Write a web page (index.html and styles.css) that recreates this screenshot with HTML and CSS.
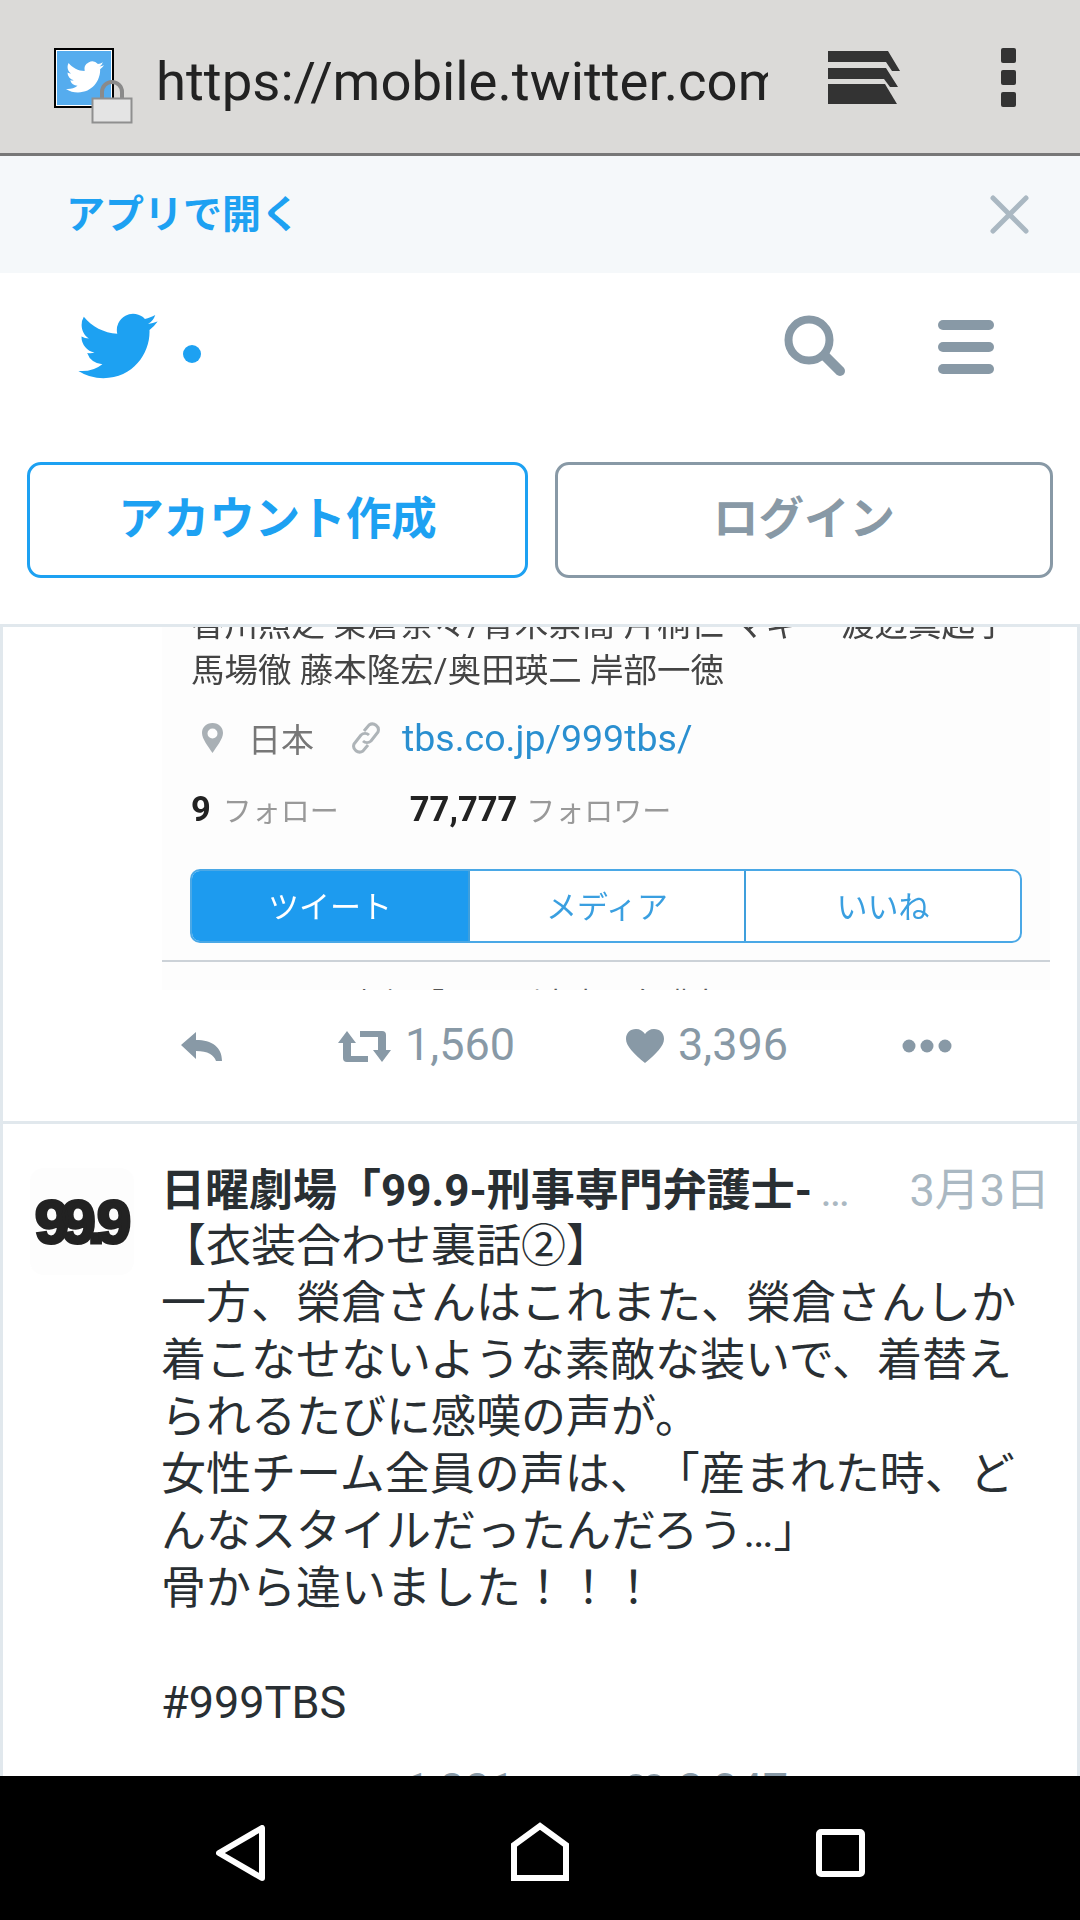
FILE: index.html
```html
<!DOCTYPE html>
<html lang="ja">
<head>
  <meta charset="UTF-8">
  <meta name="viewport" content="width=device-width, initial-scale=1.0">
  <title>Twitter</title>
  <link rel="stylesheet" href="styles.css">
</head>
<body>
  <div class="phone">
    <!-- browser chrome -->
    <div class="browser-bar">
      <div class="favicon">
        <svg class="favicon-bird" viewBox="0 0 24 24"><path fill="#fff" d="M23.953 4.57a10 10 0 01-2.825.775 4.958 4.958 0 002.163-2.723c-.951.555-2.005.959-3.127 1.184a4.92 4.92 0 00-8.384 4.482C7.69 8.095 4.067 6.13 1.64 3.162a4.822 4.822 0 00-.666 2.475c0 1.71.87 3.213 2.188 4.096a4.904 4.904 0 01-2.228-.616v.06a4.923 4.923 0 003.946 4.827 4.996 4.996 0 01-2.212.085 4.936 4.936 0 004.604 3.417 9.867 9.867 0 01-6.102 2.105c-.39 0-.779-.023-1.17-.067a13.995 13.995 0 007.557 2.209c9.053 0 13.998-7.496 13.998-13.985 0-.21 0-.42-.015-.63A9.935 9.935 0 0024 4.59z"/></svg>
        <svg class="lock" viewBox="0 0 42 44">
          <path d="M11 20V12a10 10 0 0120 0v8" fill="none" stroke="#8a8a8a" stroke-width="4"/>
          <rect x="1.5" y="18.5" width="39" height="24" fill="#e4e4e4" stroke="#8f8f8f" stroke-width="2"/>
        </svg>
      </div>
      <div class="url">https://mobile.twitter.com/999tbs</div>
      <svg class="tabs-icon" viewBox="0 0 72 53">
        <path fill="#333" d="M0 0H60L72 20H64L58 11H0Z"/>
        <path fill="#333" d="M0 17H58L70 36H62L56 28H0Z"/>
        <path fill="#333" d="M0 33H57L69 53H0Z"/>
      </svg>
      <div class="menu-dots"><span></span><span></span><span></span></div>
    </div>

    <div class="app-banner">
      <span class="app-banner-text">アプリで開く</span>
      <svg class="close-icon" viewBox="0 0 39 39"><path d="M3 3L36 36M36 3L3 36" stroke="#aab8c2" stroke-width="5" stroke-linecap="round"/></svg>
    </div>

    <header class="site-header">
      <div class="site-top">
        <svg class="logo" viewBox="0 0 24 20"><path fill="#1da1f2" d="M23.953 2.57a10 10 0 01-2.825.775 4.958 4.958 0 002.163-2.723c-.951.555-2.005.959-3.127 1.184a4.92 4.92 0 00-8.384 4.482C7.69 6.095 4.067 4.13 1.64 1.162a4.822 4.822 0 00-.666 2.475c0 1.71.87 3.213 2.188 4.096a4.904 4.904 0 01-2.228-.616v.06a4.923 4.923 0 003.946 4.827 4.996 4.996 0 01-2.212.085 4.936 4.936 0 004.604 3.417 9.867 9.867 0 01-6.102 2.105c-.39 0-.779-.023-1.17-.067a13.995 13.995 0 007.557 2.209c9.053 0 13.998-7.496 13.998-13.985 0-.21 0-.42-.015-.63A9.935 9.935 0 0024 2.59z"/></svg>
        <span class="logo-dot"></span>
        <svg class="search-icon" viewBox="0 0 62 62">
          <circle cx="25" cy="25" r="20.500" fill="none" stroke="#8899a6" stroke-width="8"/>
          <path d="M41 41L56 56" stroke="#8899a6" stroke-width="10" stroke-linecap="round"/>
        </svg>
        <div class="burger"><span></span><span></span><span></span></div>
      </div>
      <div class="site-buttons">
        <a class="btn btn-signup">アカウント作成</a>
        <a class="btn btn-login">ログイン</a>
      </div>
    </header>

    <main class="timeline">
      <article class="tweet">
        <!-- screenshot attached to the tweet, cut off at top and bottom -->
        <div class="shot">
          <div class="shot-body">
            <p class="shot-bio">香川照之 榮倉奈々/青木崇高 片桐仁 マギー 渡辺真起子<br>馬場徹 藤本隆宏/奥田瑛二 岸部一徳</p>
            <div class="shot-meta">
              <svg class="pin-icon" viewBox="0 0 23 30"><path fill-rule="evenodd" fill="#a9b0b5" d="M11.5 0C5 0 1 4.500 1 10c0 6 6 13 10.500 20C16 23 22 16 22 10 22 4.500 18 0 11.500 0zm0 5.500a5 5 0 110 10 5 5 0 010-10z"/></svg>
              <span class="shot-place">日本</span>
              <svg class="link-icon" viewBox="0 0 30 32"><path d="M13 9l5-6a6 6 0 019 7l-7 9a6 6 0 01-8 0M17 23l-5 6a6 6 0 01-9-7l7-9a6 6 0 018 0" fill="none" stroke="#aeb4b8" stroke-width="3"/></svg>
              <span class="shot-link">tbs.co.jp/999tbs/</span>
            </div>
            <div class="shot-stats">
              <b>9</b><span class="shot-label">フォロー</span>
              <b class="shot-followers">77,777</b><span class="shot-label shot-label-tight">フォロワー</span>
            </div>
            <div class="shot-tabs">
              <div class="shot-tab shot-tab-active">ツイート</div>
              <div class="shot-tab">メディア</div>
              <div class="shot-tab">いいね</div>
            </div>
          </div>
          <div class="shot-rule"></div>
          <div class="shot-next">
            <span>日曜劇場「99.9-刑事専門弁護士を語る</span>
          </div>
        </div>
        <div class="actions">
          <svg class="icon-reply" viewBox="0 0 41 29"><path fill="#8899a6" d="M0 13L15 0V8C31 8 41 15 41 29H35C33 23 27 19 15 19V27Z"/></svg>
          <div class="action">
            <svg class="icon-retweet" viewBox="0 0 53 31"><path fill="#8899a6" d="M9 0L18 12H13V25H30V31H9Q5 31 5 27V12H0ZM22 0H44Q48 0 48 4V19H53L44 31 35 19H40V6H22Z"/></svg>
            <span class="count">1,560</span>
          </div>
          <div class="action">
            <svg class="icon-heart" viewBox="0 0 38 34"><path fill="#8899a6" d="M19 34C8 25 0 17 0 10 0 4 4 0 10 0 14 0 17 2 19 5 21 2 24 0 28 0 34 0 38 4 38 10 38 17 30 25 19 34Z"/></svg>
            <span class="count">3,396</span>
          </div>
          <svg class="icon-more" viewBox="0 0 50 14"><circle cx="7" cy="7" r="6.500" fill="#8899a6"/><circle cx="25" cy="7" r="6.500" fill="#8899a6"/><circle cx="43" cy="7" r="6.500" fill="#8899a6"/></svg>
        </div>
      </article>

      <article class="tweet tweet-second">
        <div class="tweet-row">
          <div class="avatar"><span>99.9</span></div>
          <div class="tweet-content">
            <div class="tweet-head">
              <span class="tweet-name">日曜劇場「99.9-刑事専門弁護士-<span class="tweet-more">…</span></span>
              <span class="tweet-date">3月3日</span>
            </div>
            <p class="tweet-text">【衣装合わせ裏話②】<br>一方、榮倉さんはこれまた、榮倉さんしか着こなせないような素敵な装いで、着替えられるたびに感嘆の声が。<br>女性チーム全員の声は、「産まれた時、どんなスタイルだったんだろう…」<br>骨から違いました！！！<br><br>#999TBS</p>
          </div>
        </div>
        <div class="actions actions-second">
          <svg class="icon-reply" viewBox="0 0 41 29"><path fill="#8899a6" d="M0 13L15 0V8C31 8 41 15 41 29H35C33 23 27 19 15 19V27Z"/></svg>
          <div class="action">
            <svg class="icon-retweet" viewBox="0 0 53 31"><path fill="#8899a6" d="M9 0L18 12H13V25H30V31H9Q5 31 5 27V12H0ZM22 0H44Q48 0 48 4V19H53L44 31 35 19H40V6H22Z"/></svg>
            <span class="count">1,881</span>
          </div>
          <div class="action">
            <svg class="icon-heart" viewBox="0 0 38 34"><path fill="#8899a6" d="M19 34C8 25 0 17 0 10 0 4 4 0 10 0 14 0 17 2 19 5 21 2 24 0 28 0 34 0 38 4 38 10 38 17 30 25 19 34Z"/></svg>
            <span class="count">3,047</span>
          </div>
        </div>
      </article>
    </main>

    <!-- android nav -->
    <nav class="nav-bar">
      <svg class="nav-back" viewBox="0 0 49 56"><path d="M46 3V53L3 28Z" fill="none" stroke="#fff" stroke-width="6" stroke-linejoin="round"/></svg>
      <svg class="nav-home" viewBox="0 0 58 59"><path d="M3 56V23L29 4 55 23V56Z" fill="none" stroke="#fff" stroke-width="6"/></svg>
      <svg class="nav-recent" viewBox="0 0 49 48"><rect x="3" y="3" width="43" height="42" rx="2" fill="none" stroke="#fff" stroke-width="6"/></svg>
    </nav>
  </div>
</body>
</html>
```

FILE: styles.css
```css
* {
  box-sizing: border-box;
}

body {
  margin: 0;
  background-color: #fff;
  font-family: Roboto, "Noto Sans CJK JP", sans-serif;
  color: #292f33;
  text-spacing-trim: space-all;
}

p {
  margin: 0;
}

svg {
  display: block;
  flex: none;
}

.phone {
  width: 1080px;
  height: 1920px;
  display: flex;
  flex-direction: column;
  overflow: hidden;
}

/* browser bar */
.browser-bar {
  height: 156px;
  flex: none;
  display: flex;
  align-items: center;
  padding: 2px 0 0 54px;
  background-color: #dbdad8;
  border-bottom: 3px solid #777;
}

.favicon {
  position: relative;
  width: 60px;
  height: 60px;
  border: 2px solid #000;
  outline: 1px solid #fff;
  outline-offset: -3px;
  background-color: #55acee;
}

.favicon-bird {
  width: 38px;
  height: 38px;
  margin: 8px 0 0 10px;
}

.lock {
  position: absolute;
  left: 35px;
  top: 30px;
  width: 42px;
  height: 44px;
}

.url {
  width: 612px;
  margin: 6px 0 0 42px;
  font-size: 54.500px;
  line-height: 70px;
  color: #222;
  white-space: nowrap;
  overflow: hidden;
}

.tabs-icon {
  width: 72px;
  height: 53px;
  margin-left: 60px;
}

.menu-dots {
  display: flex;
  flex-direction: column;
  gap: 7px;
  margin-left: 101px;
}

.menu-dots span {
  width: 15px;
  height: 15px;
  border-radius: 2px;
  background-color: #333;
}

/* open-in-app banner */
.app-banner {
  height: 117px;
  flex: none;
  display: flex;
  align-items: center;
  justify-content: space-between;
  padding: 0 51px 0 66px;
  background-color: #f5f8fa;
}

.app-banner-text {
  margin-top: -7px;
  font-size: 39px;
  font-weight: 700;
  color: #1da1f2;
}

.close-icon {
  width: 39px;
  height: 39px;
}

/* site header */
.site-header {
  flex: none;
  background-color: #fff;
}

.site-top {
  display: flex;
  align-items: center;
  height: 64px;
  margin: 41px 0 84px;
  padding: 0 86px 0 78px;
}

.logo {
  width: 80px;
  height: 66px;
}

.logo-dot {
  width: 18px;
  height: 18px;
  margin: 16px 0 0 25px;
  border-radius: 50%;
  background-color: #1da1f2;
}

.search-icon {
  width: 62px;
  height: 62px;
  margin-left: auto;
}

.burger {
  display: flex;
  flex-direction: column;
  gap: 12px;
  margin: 1px 0 0 92px;
}

.burger span {
  width: 56px;
  height: 10px;
  border-radius: 5px;
  background-color: #8899a6;
}

.site-buttons {
  display: flex;
  gap: 27px;
  padding: 0 27px 46px 27px;
}

.btn {
  height: 116px;
  display: flex;
  align-items: center;
  justify-content: center;
  padding-bottom: 10px;
  border: 3px solid;
  border-radius: 14px;
  font-size: 45.500px;
  font-weight: 700;
}

.btn-signup {
  width: 501px;
  color: #1da1f2;
}

.btn-login {
  width: 498px;
  color: #8899a6;
}

/* timeline */
.timeline {
  flex: 1;
  min-height: 0;
  overflow: hidden;
  border: 3px solid #e1e8ed;
  border-bottom: 0;
}

.tweet + .tweet {
  border-top: 3px solid #e1e8ed;
}

.shot {
  height: 363px;
  margin-left: 159px;
  margin-right: 27px;
  overflow: hidden;
  background-color: #fdfdfd;
}

.shot-body {
  padding: 0 0 0 29px;
  margin-top: -25px;
  color: #444;
  filter: blur(0.4px);
}

.shot-bio {
  font-size: 33.500px;
  line-height: 46px;
  white-space: nowrap;
}

.shot-meta {
  display: flex;
  align-items: center;
  height: 46px;
  margin-top: 21px;
  padding-left: 10px;
}

.pin-icon {
  width: 23px;
  height: 30px;
}

.shot-place {
  margin-left: 24px;
  font-size: 33px;
  color: #777;
}

.link-icon {
  width: 30px;
  height: 32px;
  margin-left: 37px;
}

.shot-link {
  margin-left: 21px;
  font-size: 37.500px;
  color: #2a8fd0;
}

.shot-stats {
  display: flex;
  align-items: center;
  height: 40px;
  margin-top: 28px;
  font-size: 34.500px;
  color: #222;
}

.shot-label {
  margin-left: 12px;
  font-size: 29px;
  color: #999;
}

.shot-label-tight {
  margin-left: 9px;
}

.shot-followers {
  margin-left: 71px;
}

.shot-tabs {
  display: flex;
  width: 832px;
  height: 74px;
  margin: 40px 0 0 -1px;
  border: 2px solid #4aa8e6;
  border-radius: 10px;
  overflow: hidden;
  background-color: #fff;
}

.shot-tab {
  display: flex;
  align-items: center;
  justify-content: center;
  width: 277px;
  padding-bottom: 3px;
  font-size: 31px;
  color: #3a9fe0;
}

.shot-tab + .shot-tab {
  border-left: 2px solid #3f9fdc;
}

.shot-tab-active {
  background-color: #1d9bef;
  color: #fff;
}

.shot-rule {
  height: 2px;
  margin-top: 17px;
  background-color: #ccd2d8;
}

.shot-next {
  margin-top: 22px;
  padding-left: 132px;
  font-size: 30px;
  line-height: 40px;
  color: #555;
  white-space: nowrap;
}

.actions {
  display: grid;
  grid-template-columns: 157px 288px 276px 1fr;
  align-items: center;
  height: 48px;
  margin: 31px 0 52px;
  padding-left: 178px;
  font-size: 45px;
  color: #8899a6;
}

.actions-second {
  margin: 35px 0 0;
}

.action {
  display: flex;
  align-items: center;
  gap: 14px;
}

.count {
  margin-top: -3px;
}

.icon-reply {
  width: 41px;
  height: 29px;
}

.icon-retweet {
  width: 53px;
  height: 31px;
}

.icon-heart {
  width: 38px;
  height: 34px;
}

.icon-more {
  width: 50px;
  height: 14px;
}

.tweet-row {
  display: flex;
  padding: 36px 27px 0;
}

.avatar {
  flex: none;
  width: 104px;
  height: 107px;
  margin-top: 8px;
  display: flex;
  align-items: center;
  justify-content: center;
  border-radius: 14px;
  background-color: #fdfdfd;
  overflow: hidden;
}

.avatar span {
  margin-left: -6px;
  font-family: "Liberation Sans", sans-serif;
  font-size: 62px;
  font-weight: 700;
  letter-spacing: -8px;
  color: #222;
  -webkit-text-stroke: 3px #222;
  white-space: nowrap;
}

.tweet-content {
  flex: 1;
  min-width: 0;
  margin-left: 27px;
}

.tweet-head {
  display: flex;
  justify-content: space-between;
  height: 58px;
  line-height: 62px;
}

.tweet-name {
  font-size: 44px;
  font-weight: 700;
  white-space: nowrap;
}

.tweet-more {
  margin-left: 8px;
  font-weight: 400;
  color: #aab8c2;
}

.tweet-date {
  font-size: 45px;
  color: #aab8c2;
  white-space: nowrap;
}

.tweet-text {
  font-size: 45px;
  line-height: 57px;
}

/* android nav */
.nav-bar {
  position: relative;
  height: 144px;
  flex: none;
  background-color: #000;
}

.nav-back {
  position: absolute;
  left: 216px;
  top: 49px;
  width: 49px;
  height: 56px;
}

.nav-home {
  position: absolute;
  left: 511px;
  top: 46px;
  width: 58px;
  height: 59px;
}

.nav-recent {
  position: absolute;
  left: 816px;
  top: 53px;
  width: 49px;
  height: 48px;
}
```
